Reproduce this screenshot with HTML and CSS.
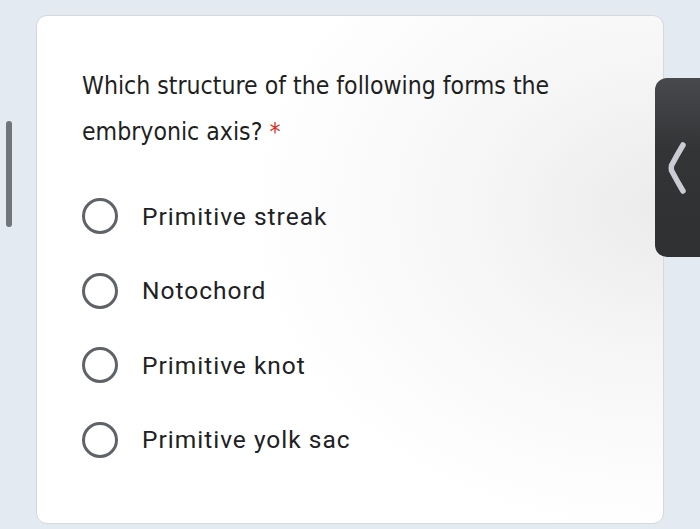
FILE: index.html
```html
<!DOCTYPE html>
<html>
<head>
<meta charset="utf-8">
<link rel="stylesheet" href="styles.css">
</head>
<body>
<div class="scrollbar"></div>
<div class="card">
  <div class="question">Which structure of the following forms the embryonic axis?&nbsp;<span class="req">*</span></div>
  <div class="options">
    <div class="option"><span class="radio"></span><span class="label">Primitive streak</span></div>
    <div class="option"><span class="radio"></span><span class="label">Notochord</span></div>
    <div class="option"><span class="radio"></span><span class="label">Primitive knot</span></div>
    <div class="option"><span class="radio"></span><span class="label">Primitive yolk sac</span></div>
  </div>
</div>
<div class="tab">
  <svg width="45" height="179" viewBox="0 0 45 179">
    <path d="M28 67 Q22 77 16.5 87.5 Q16 90 16.5 92.5 Q22 103 28 113" fill="none" stroke="#cbcbd3" stroke-width="5.5" stroke-linecap="round" stroke-linejoin="round"/>
  </svg>
</div>
</body>
</html>
```
FILE: styles.css
```css
html, body {
  margin: 0;
  padding: 0;
}
body {
  width: 700px;
  height: 529px;
  overflow: hidden;
  background: #e3eaf1;
  position: relative;
}
.scrollbar {
  position: absolute;
  left: 6px;
  top: 121px;
  width: 6px;
  height: 106px;
  border-radius: 3px;
  background: #6f7579;
}
.card {
  box-sizing: border-box;
  margin: 15px 0 0 36px;
  width: 628px;
  height: 509px;
  border: 1px solid #d3d9df;
  border-radius: 11px;
  background: radial-gradient(ellipse 420px 330px at 100% 38%, #ebebeb 0%, #f6f6f6 45%, #ffffff 100%);
  padding: 47px 0 0 45px;
}
.question {
  font-family: "DejaVu Sans Condensed", "DejaVu Sans", sans-serif;
  font-size: 24.6px;
  line-height: 46px;
  color: #1f1f1f;
  width: 520px;
}
.req {
  color: #d93025;
}
.options {
  margin-top: 24px;
}
.option {
  display: flex;
  align-items: center;
  height: 74.5px;
  gap: 24px;
}
.radio {
  box-sizing: border-box;
  width: 36px;
  height: 36px;
  border: 3.2px solid #5f6368;
  border-radius: 50%;
  flex: none;
}
.label {
  font-family: Roboto, "Liberation Sans", sans-serif;
  font-size: 24.5px;
  letter-spacing: 1px;
  color: #202124;
}
.tab {
  position: absolute;
  right: 0;
  top: 78px;
  width: 45px;
  height: 179px;
  border-radius: 12px 0 0 12px;
  background: linear-gradient(#48494c, #333436 40%, #2f3032);
}
.tab svg {
  display: block;
}
```
